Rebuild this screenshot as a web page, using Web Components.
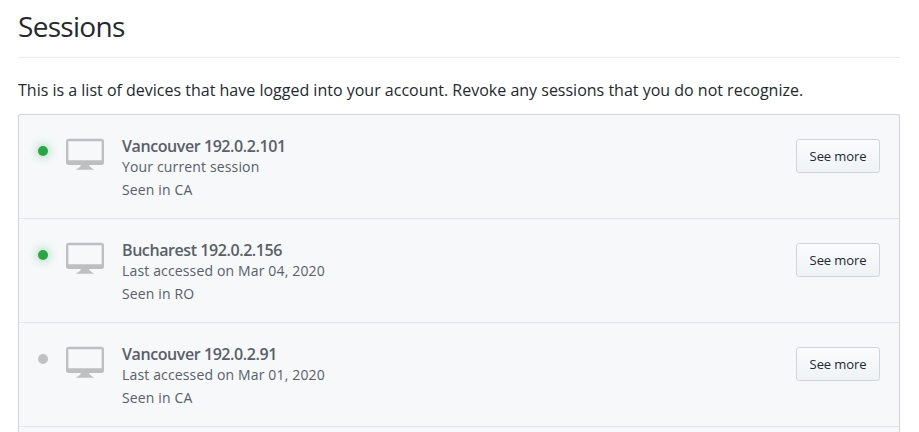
<!DOCTYPE html>
<html>
<head>
<meta charset="utf-8">
<title>Sessions</title>
<style>
  html, body { margin: 0; background: #fff; overflow: hidden; height: 432px; }
  body { font-family: "Open Sans", "Noto Sans", sans-serif; color: #24292e; }
</style>
</head>
<body>
<template id="session-row-tpl">
  <style>
    :host { display: flex; height: 103px; border-top: 1px solid #e1e4e8; box-sizing: content-box; }
    :host([first]) { border-top: 0; }
    :host([blank]) { height: 5px; }
    :host([blank]) > * { display: none; }
    .dot-col { width: 47px; flex: none; padding-top: 31px; padding-left: 19px; box-sizing: border-box; }
    .dot { display: block; width: 10px; height: 10px; border-radius: 50%; background: #c0c1c3; }
    :host([active]) .dot { background: #28a745; box-shadow: 0 0 8px 2px rgba(40,167,69,.28); }
    .icon { flex: none; width: 38px; height: 38px; margin-top: 19px; fill: #bdbfc1; }
    .info { flex: 1; margin-left: 18px; padding-top: 20px; color: #586069; font-size: 14px; letter-spacing: .15px; }
    .title { font-size: 16px; line-height: 22px; font-weight: 600; letter-spacing: -.42px; }
    .sub { line-height: 20px; }
    .seen { line-height: 20px; margin-top: 3px; }
    .btn { flex: none; align-self: flex-start; margin: 24px 19px 0 0; width: 84px; height: 34px; box-sizing: border-box;
      border: 1px solid #d1d5da; border-radius: 3px; background: linear-gradient(#fafbfc, #eff3f6);
      color: #24292e; font: 500 13px/32px "Open Sans", sans-serif; letter-spacing: -.1px; text-align: center; padding: 0; }
  </style>
  <div class="dot-col"><span class="dot"></span></div>
  <svg class="icon" viewBox="0 0 16 16"><path d="M15 2H1c-.55 0-1 .45-1 1v9c0 .55.45 1 1 1h5.34c-.25.61-.86 1.39-2.34 2h8c-1.48-.61-2.09-1.39-2.34-2H15c.55 0 1-.45 1-1V3c0-.55-.45-1-1-1zm0 9H1V3h14v8z"/></svg>
  <div class="info">
    <div class="title"><slot name="title"></slot></div>
    <div class="sub"><slot name="sub"></slot></div>
    <div class="seen"><slot name="seen"></slot></div>
  </div>
  <button class="btn">See more</button>
</template>
<template id="sessions-panel-tpl">
  <style>
    :host { display: block; padding: 0 19px 0 18px; }
    h2 { margin: 0; height: 58px; box-sizing: border-box; border-bottom: 1px solid #eaecef; font-size: 28px; font-weight: 400; line-height: 53px; letter-spacing: -.7px; }
    p { margin: 0; padding-top: 20px; height: 56px; box-sizing: border-box; font-size: 16px; line-height: 24px; letter-spacing: 0; }
    .list { background: #f6f8fa; border: 1px solid #d1d5da; border-bottom: 0; border-radius: 3px 3px 0 0; }
  </style>
  <h2>Sessions</h2>
  <p>This is a list of devices that have logged into your account. Revoke any sessions that you do not recognize.</p>
  <div class="list"><slot></slot></div>
</template>

<sessions-panel>
  <session-row first active>
    <span slot="title">Vancouver 192.0.2.101</span>
    <span slot="sub">Your current session</span>
    <span slot="seen">Seen in CA</span>
  </session-row>
  <session-row active>
    <span slot="title">Bucharest 192.0.2.156</span>
    <span slot="sub">Last accessed on Mar 04, 2020</span>
    <span slot="seen">Seen in RO</span>
  </session-row>
  <session-row>
    <span slot="title">Vancouver 192.0.2.91</span>
    <span slot="sub">Last accessed on Mar 01, 2020</span>
    <span slot="seen">Seen in CA</span>
  </session-row>
  <session-row blank></session-row>
</sessions-panel>

<script>
class SessionRow extends HTMLElement {
  constructor() {
    super();
    this.attachShadow({ mode: "open" }).appendChild(document.getElementById("session-row-tpl").content.cloneNode(true));
  }
}
class SessionsPanel extends HTMLElement {
  constructor() {
    super();
    this.attachShadow({ mode: "open" }).appendChild(document.getElementById("sessions-panel-tpl").content.cloneNode(true));
  }
}
customElements.define("session-row", SessionRow);
customElements.define("sessions-panel", SessionsPanel);
</script>
</body>
</html>
